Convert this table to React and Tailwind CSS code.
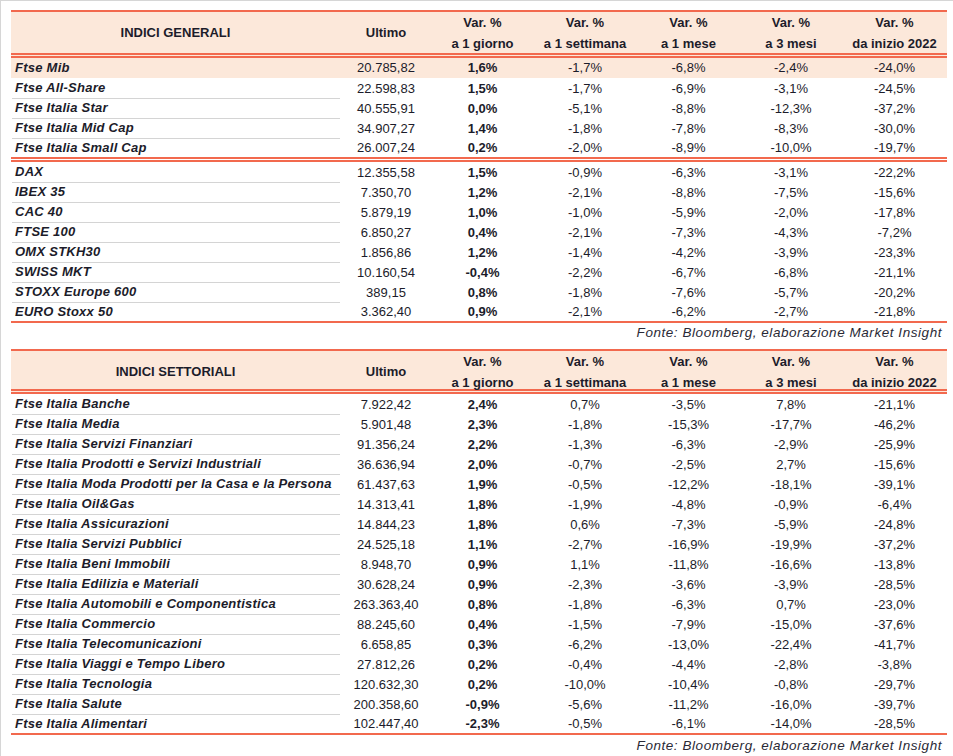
import React from "react";

const COLS = "grid grid-cols-[329px_92px_101px_104px_103px_102px_105px]";

const general = [
  ["Ftse Mib", "20.785,82", "1,6%", "-1,7%", "-6,8%", "-2,4%", "-24,0%"],
  ["Ftse All-Share", "22.598,83", "1,5%", "-1,7%", "-6,9%", "-3,1%", "-24,5%"],
  ["Ftse Italia Star", "40.555,91", "0,0%", "-5,1%", "-8,8%", "-12,3%", "-37,2%"],
  ["Ftse Italia Mid Cap", "34.907,27", "1,4%", "-1,8%", "-7,8%", "-8,3%", "-30,0%"],
  ["Ftse Italia Small Cap", "26.007,24", "0,2%", "-2,0%", "-8,9%", "-10,0%", "-19,7%"],
];

const foreign = [
  ["DAX", "12.355,58", "1,5%", "-0,9%", "-6,3%", "-3,1%", "-22,2%"],
  ["IBEX 35", "7.350,70", "1,2%", "-2,1%", "-8,8%", "-7,5%", "-15,6%"],
  ["CAC 40", "5.879,19", "1,0%", "-1,0%", "-5,9%", "-2,0%", "-17,8%"],
  ["FTSE 100", "6.850,27", "0,4%", "-2,1%", "-7,3%", "-4,3%", "-7,2%"],
  ["OMX STKH30", "1.856,86", "1,2%", "-1,4%", "-4,2%", "-3,9%", "-23,3%"],
  ["SWISS MKT", "10.160,54", "-0,4%", "-2,2%", "-6,7%", "-6,8%", "-21,1%"],
  ["STOXX Europe 600", "389,15", "0,8%", "-1,8%", "-7,6%", "-5,7%", "-20,2%"],
  ["EURO Stoxx 50", "3.362,40", "0,9%", "-2,1%", "-6,2%", "-2,7%", "-21,8%"],
];

const sectors = [
  ["Ftse Italia Banche", "7.922,42", "2,4%", "0,7%", "-3,5%", "7,8%", "-21,1%"],
  ["Ftse Italia Media", "5.901,48", "2,3%", "-1,8%", "-15,3%", "-17,7%", "-46,2%"],
  ["Ftse Italia Servizi Finanziari", "91.356,24", "2,2%", "-1,3%", "-6,3%", "-2,9%", "-25,9%"],
  ["Ftse Italia Prodotti e Servizi Industriali", "36.636,94", "2,0%", "-0,7%", "-2,5%", "2,7%", "-15,6%"],
  ["Ftse Italia Moda Prodotti per la Casa e la Persona", "61.437,63", "1,9%", "-0,5%", "-12,2%", "-18,1%", "-39,1%"],
  ["Ftse Italia Oil&Gas", "14.313,41", "1,8%", "-1,9%", "-4,8%", "-0,9%", "-6,4%"],
  ["Ftse Italia Assicurazioni", "14.844,23", "1,8%", "0,6%", "-7,3%", "-5,9%", "-24,8%"],
  ["Ftse Italia Servizi Pubblici", "24.525,18", "1,1%", "-2,7%", "-16,9%", "-19,9%", "-37,2%"],
  ["Ftse Italia Beni Immobili", "8.948,70", "0,9%", "1,1%", "-11,8%", "-16,6%", "-13,8%"],
  ["Ftse Italia Edilizia e Materiali", "30.628,24", "0,9%", "-2,3%", "-3,6%", "-3,9%", "-28,5%"],
  ["Ftse Italia Automobili e Componentistica", "263.363,40", "0,8%", "-1,8%", "-6,3%", "0,7%", "-23,0%"],
  ["Ftse Italia Commercio", "88.245,60", "0,4%", "-1,5%", "-7,9%", "-15,0%", "-37,6%"],
  ["Ftse Italia Telecomunicazioni", "6.658,85", "0,3%", "-6,2%", "-13,0%", "-22,4%", "-41,7%"],
  ["Ftse Italia Viaggi e Tempo Libero", "27.812,26", "0,2%", "-0,4%", "-4,4%", "-2,8%", "-3,8%"],
  ["Ftse Italia Tecnologia", "120.632,30", "0,2%", "-10,0%", "-10,4%", "-0,8%", "-29,7%"],
  ["Ftse Italia Salute", "200.358,60", "-0,9%", "-5,6%", "-11,2%", "-16,0%", "-39,7%"],
  ["Ftse Italia Alimentari", "102.447,40", "-2,3%", "-0,5%", "-6,1%", "-14,0%", "-28,5%"],
];

function OrangeLine() {
  return <div className="h-[2px] bg-[#f2694e]" />;
}

function DoubleLine({ gap }) {
  return (
    <div>
      <div className="h-[2px] bg-[#f2694e]" />
      <div className={gap === "peach" ? "h-px bg-[#fce8da]" : "h-px bg-white"} />
      <div className="h-[2px] bg-[#f2694e]" />
    </div>
  );
}

function Header({ title, h }) {
  const heads = [
    ["Var. %", "a 1 giorno"],
    ["Var. %", "a 1 settimana"],
    ["Var. %", "a 1 mese"],
    ["Var. %", "a 3 mesi"],
    ["Var. %", "da inizio 2022"],
  ];
  return (
    <div className={`${COLS} ${h} bg-[#fce8da] font-bold text-[13px]`}>
      <div className="flex items-center justify-center">{title}</div>
      <div className="flex items-center justify-center">Ultimo</div>
      {heads.map((hd, i) => (
        <div key={i} className="flex flex-col items-center justify-center leading-[21px] whitespace-nowrap">
          <span>{hd[0]}</span>
          <span>{hd[1]}</span>
        </div>
      ))}
    </div>
  );
}

function Row({ r, sep, highlight, last }) {
  return (
    <div
      className={`${COLS} ${last ? "h-[19px]" : "h-[20px]"} ${highlight ? "bg-[#fce8da]" : ""} text-[13px]`}
    >
      <div
        className={`flex items-center pl-[3px] ml-px font-bold italic tracking-[0.25px] whitespace-nowrap ${
          sep ? "border-b border-[#d4d4d4]" : ""
        }`}
      >
        {r[0]}
      </div>
      <div className="flex items-center justify-center">{r[1]}</div>
      <div className="flex items-center justify-center font-bold">{r[2]}</div>
      <div className="flex items-center justify-center">{r[3]}</div>
      <div className="flex items-center justify-center">{r[4]}</div>
      <div className="flex items-center justify-center">{r[5]}</div>
      <div className="flex items-center justify-center">{r[6]}</div>
    </div>
  );
}

function Source({ h }) {
  return (
    <div className={`${h} flex justify-end pr-[5px] italic text-[13.5px] leading-[20px] tracking-[0.55px] text-[#2a2a36] whitespace-nowrap`}>
      Fonte: Bloomberg, elaborazione Market Insight
    </div>
  );
}

export default function App() {
  return (
    <div
      className="w-[953px] h-[756px] bg-white border-t border-l border-[#d6d6d6] overflow-hidden text-[#1c1c2a]"
      style={{ fontFamily: '"Liberation Sans", Arial, sans-serif' }}
    >
      <div className="pt-[9px] pl-[10px] w-[946px]">
        {/* Table 1 */}
        <OrangeLine />
        <Header title="INDICI GENERALI" h="h-[41px]" />
        <DoubleLine gap="peach" />
        {general.map((r, i) => (
          <Row
            key={r[0]}
            r={r}
            highlight={i === 0}
            sep={i > 0 && i < general.length - 1}
            last={i === general.length - 1}
          />
        ))}
        <DoubleLine gap="white" />
        {foreign.map((r, i) => (
          <Row key={r[0]} r={r} sep={i < foreign.length - 1} last={i === foreign.length - 1} />
        ))}
        <OrangeLine />
        <Source h="h-[26px]" />

        {/* Table 2 */}
        <OrangeLine />
        <Header title="INDICI SETTORIALI" h="h-[38px]" />
        <DoubleLine gap="peach" />
        {sectors.map((r, i) => (
          <Row key={r[0]} r={r} sep={i < sectors.length - 1} last={i === sectors.length - 1} />
        ))}
        <OrangeLine />
        <Source h="h-[20px] pt-[1px]" />
      </div>
    </div>
  );
}
